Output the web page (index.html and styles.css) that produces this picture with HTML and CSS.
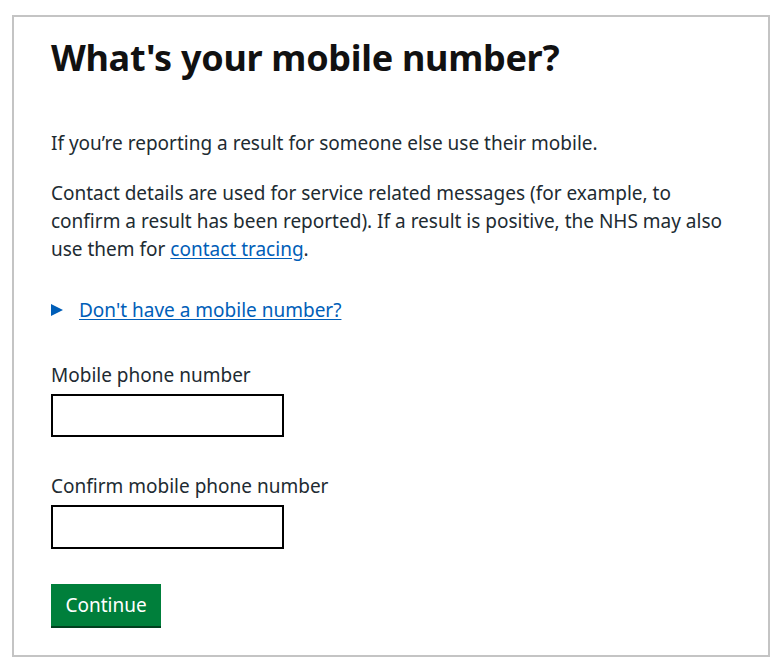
FILE: index.html
```html
<!DOCTYPE html>
<html lang="en">
<head>
<meta charset="utf-8">
<title>What's your mobile number?</title>
<link rel="stylesheet" href="styles.css">
</head>
<body>
<main class="frame">
  <h1 class="heading">What's your mobile number?</h1>
  <p class="body-text">If you’re reporting a result for someone else use their mobile.</p>
  <p class="body-text">Contact details are used for service related messages (for example, to confirm a result has been reported). If a result is positive, the NHS may also use them for <a class="link" href="#">contact tracing</a>.</p>
  <div class="details">
    <span class="arrow"></span>
    <a class="link" href="#">Don't have a mobile number?</a>
  </div>
  <div class="field">
    <label class="label" for="m1">Mobile phone number</label>
    <input class="input" id="m1" type="tel">
  </div>
  <div class="field">
    <label class="label" for="m2">Confirm mobile phone number</label>
    <input class="input" id="m2" type="tel">
  </div>
  <button class="button" type="button">Continue</button>
</main>
</body>
</html>
```
FILE: styles.css
```css
html, body {
  margin: 0;
  padding: 0;
  background: #fff;
}
body {
  font-family: "Noto Sans", "Liberation Sans", sans-serif;
  color: #212b32;
  padding: 15px 12px 10px 12px;
}
.frame {
  border: 2px solid #c4c4c4;
  height: 642px;
  box-sizing: border-box;
  padding: 18px 37px 0 37px;
}
.heading {
  font-size: 36px;
  font-weight: 700;
  margin: 0 0 48px 0;
  line-height: 46px;
  color: #111;
  letter-spacing: -0.3px;
}
.body-text {
  font-size: 19px;
  line-height: 28px;
  margin: 0 0 22px 0;
}
.link {
  color: #005eb8;
  text-decoration: underline;
  text-underline-offset: 2px;
}
.details {
  display: flex;
  align-items: center;
  gap: 16px;
  font-size: 19px;
  line-height: 28px;
  margin: 33px 0 37px 0;
}
.arrow {
  width: 0;
  height: 0;
  border-top: 6.5px solid transparent;
  border-bottom: 6.5px solid transparent;
  border-left: 12px solid #005eb8;
}
.field {
  display: flex;
  flex-direction: column;
  margin-bottom: 35px;
}
.label {
  font-size: 19px;
  line-height: 28px;
  margin-bottom: 5px;
}
.input {
  width: 233px;
  height: 43px;
  box-sizing: border-box;
  border: 2px solid #000;
  margin: 0;
  padding: 4px;
  border-radius: 0;
  font-size: 19px;
}
.field + .field .input {
  height: 44px;
}
.button {
  display: block;
  margin-top: 0;
  background: #007f3b;
  color: #fff;
  border: 0;
  border-radius: 0;
  box-shadow: 0 2px 0 #00401e;
  font-family: inherit;
  font-size: 19px;
  padding: 0 13px;
  height: 42px;
  width: 110px;
}
```
